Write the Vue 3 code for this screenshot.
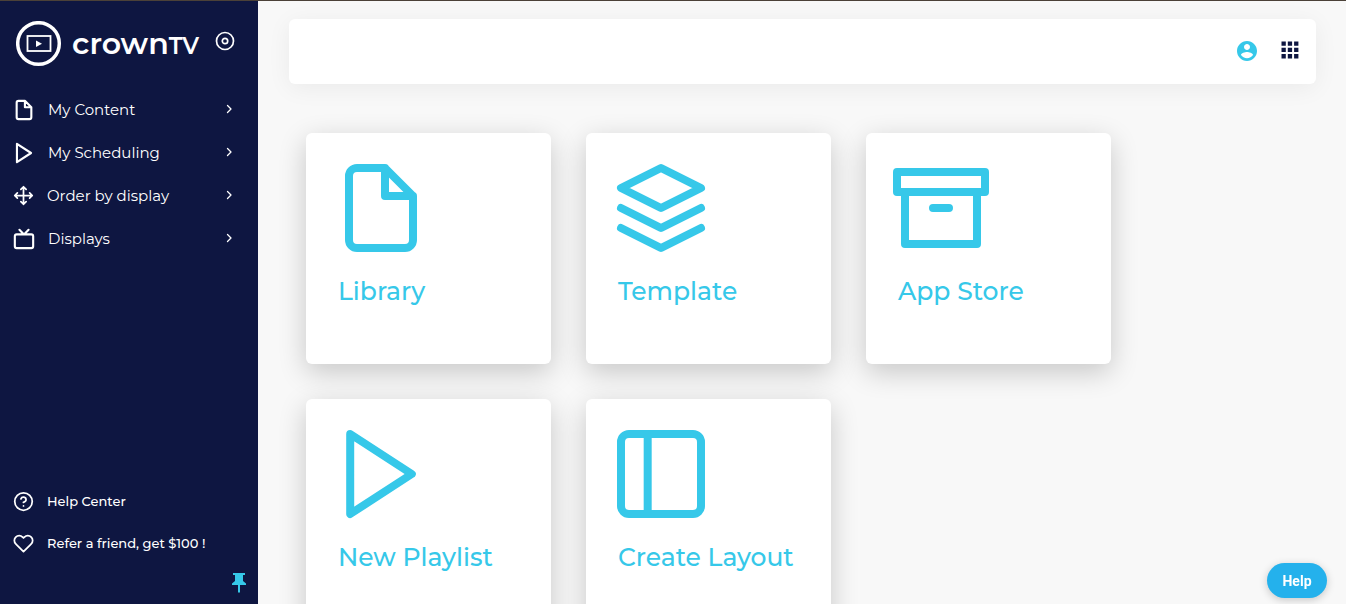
<script setup>
const menu = [
  { label: 'My Content', icon: 'file' },
  { label: 'My Scheduling', icon: 'play' },
  { label: 'Order by display', icon: 'move' },
  { label: 'Displays', icon: 'tv' },
]
const support = [
  { label: 'Help Center', icon: 'help' },
  { label: 'Refer a friend, get $100 !', icon: 'heart' },
]
const cards = [
  { label: 'Library', icon: 'file' },
  { label: 'Template', icon: 'layers' },
  { label: 'App Store', icon: 'archive' },
  { label: 'New Playlist', icon: 'play' },
  { label: 'Create Layout', icon: 'layout' },
]
const paths = {
  file: 'M13 2H6a2 2 0 0 0-2 2v16a2 2 0 0 0 2 2h12a2 2 0 0 0 2-2V9zM13 2v7h7',
  play: 'M4.3 2l15.4 10L4.3 22z',
  move: 'M5 9l-3 3 3 3M9 5l3-3 3 3M15 19l-3 3-3-3M19 9l3 3-3 3M2 12h20M12 2v20',
  tv: 'M4 7h16a2 2 0 0 1 2 2v11a2 2 0 0 1-2 2H4a2 2 0 0 1-2-2V9a2 2 0 0 1 2-2zM17 2l-5 5-5-5',
  help: 'M22 12a10 10 0 1 1-20 0 10 10 0 0 1 20 0zM9.09 9a3 3 0 0 1 5.83 1c0 2-3 3-3 3M12 17h.01',
  heart: 'M20.84 4.61a5.5 5.5 0 0 0-7.78 0L12 5.67l-1.06-1.06a5.5 5.5 0 0 0-7.78 7.78l1.06 1.06L12 21.23l7.78-7.78 1.06-1.06a5.5 5.5 0 0 0 0-7.78z',
  layers: 'M12 2L2 7l10 5 10-5zM2 17l10 5 10-5M2 12l10 5 10-5',
  archive: 'M21 8v13H3V8M1 3h22v5H1zM10 12h4',
  layout: 'M4 2h16a2 2 0 0 1 2 2v16a2 2 0 0 1-2 2H4a2 2 0 0 1-2-2V4a2 2 0 0 1 2-2zM8.67 2v20',
}
</script>

<template>
  <div class="shell">
    <aside class="sidebar">
      <div class="brand">
        <a class="logo" href="#" aria-label="crownTV">
          <svg class="logo-mark" viewBox="0 0 46 46" aria-hidden="true">
            <circle cx="22.500" cy="22.500" r="20.800" fill="none" stroke="#fff" stroke-width="3.500" />
            <rect x="11.500" y="15" width="23" height="15" fill="none" stroke="#fff" stroke-width="1.800" />
            <path d="M20 19.500l6 3.200-6 3.200z" fill="#fff" />
          </svg>
          <span class="word">crown<span class="word-suffix">TV</span></span>
        </a>
        <button class="collapse" type="button" aria-label="Collapse menu">
          <svg viewBox="0 0 20 20" aria-hidden="true">
            <circle cx="10" cy="10" r="8.500" /><circle cx="10" cy="10" r="2.700" />
          </svg>
        </button>
      </div>

      <nav class="menu">
        <a v-for="m in menu" :key="m.label" class="row" href="#">
          <svg class="icon line" :class="m.icon" viewBox="0 0 24 24" aria-hidden="true"><path :d="paths[m.icon]" /></svg>
          <span class="label">{{ m.label }}</span>
          <svg class="chevron line" viewBox="0 0 10 10" aria-hidden="true"><path d="M3.500 1.500L7 5 3.500 8.500" /></svg>
        </a>
      </nav>

      <nav class="support">
        <a v-for="m in support" :key="m.label" class="row" href="#">
          <svg class="icon line" :class="m.icon" viewBox="0 0 24 24" aria-hidden="true"><path :d="paths[m.icon]" /></svg>
          <span class="label">{{ m.label }}</span>
        </a>
      </nav>
      <button class="pin" type="button" aria-label="Pin menu">
        <svg viewBox="0 0 14 20" aria-hidden="true">
          <path d="M1 0h12v2h-2v6l3 2.500v1.500H8v7l-1 1-1-1v-7H0v-1.500L3 8V2H1z" />
        </svg>
      </button>
    </aside>

    <main class="main">
      <header class="topbar">
        <button type="button" class="account" aria-label="Account">
          <svg viewBox="2 2 20 20" aria-hidden="true">
            <path d="M12 2C6.480 2 2 6.480 2 12s4.480 10 10 10 10-4.480 10-10S17.520 2 12 2zm0 3c1.660 0 3 1.340 3 3s-1.340 3-3 3-3-1.340-3-3 1.340-3 3-3zm0 14.200c-2.500 0-4.710-1.280-6-3.220.030-1.990 4-3.080 6-3.080 1.990 0 5.970 1.090 6 3.080-1.290 1.940-3.500 3.220-6 3.220z" />
          </svg>
        </button>
        <button type="button" class="apps" aria-label="Apps">
          <svg viewBox="0 0 18 18" aria-hidden="true">
            <path d="M.5.5h4.300v4.300H.5zM6.800.5h4.300v4.300H6.800zM13.100.5h4.300v4.300h-4.300zM.5 6.800h4.300v4.300H.5zM6.800 6.800h4.300v4.300H6.800zM13.100 6.800h4.300v4.300h-4.300zM.5 13.100h4.300v4.300H.5zM6.800 13.100h4.300v4.300H6.800zM13.100 13.100h4.300v4.300h-4.300z" />
          </svg>
        </button>
      </header>

      <section class="cards">
        <a v-for="c in cards" :key="c.label" class="card" href="#">
          <svg class="card-icon line" viewBox="0 0 24 24" aria-hidden="true"><path :d="paths[c.icon]" /></svg>
          <span class="card-title">{{ c.label }}</span>
        </a>
      </section>
    </main>

    <button class="help-button" type="button">Help</button>
  </div>
</template>

<style>
body {
  margin: 0;
  background: #f8f8f8;
}
</style>

<style scoped>
.shell {
  display: flex;
  box-sizing: border-box;
  height: 100vh;
  border-top: 1px solid #4b4138;
  font-family: Montserrat, Inter, "Liberation Sans", sans-serif;
  background: #f8f8f8;
}
a {
  color: inherit;
  text-decoration: none;
}
button {
  padding: 0;
  border: 0;
  background: none;
  font-family: inherit;
  cursor: pointer;
}
svg {
  display: block;
}
.line {
  fill: none;
  stroke: currentColor;
  stroke-width: 2;
  stroke-linecap: round;
  stroke-linejoin: round;
}
.sidebar {
  display: flex;
  flex: none;
  flex-direction: column;
  box-sizing: border-box;
  width: 258px;
  color: #fff;
  background: #0e1641;
}
.brand {
  display: flex;
  justify-content: space-between;
  align-items: flex-start;
  padding: 20px 23px 0 16px;
}
.logo {
  display: flex;
  align-items: center;
  gap: 10px;
}
.logo-mark {
  width: 46px;
  height: 46px;
}
.word {
  font-size: 30px;
  font-weight: 600;
  line-height: 46px;
}
.word-suffix {
  font-size: 23px;
  line-height: 1;
}
.collapse {
  margin-top: 10px;
}
.collapse svg {
  width: 20px;
  height: 20px;
  fill: none;
  stroke: #fff;
  stroke-width: 1.7;
}
.menu {
  padding-top: 21px;
}
.row {
  display: flex;
  align-items: center;
  gap: 13px;
  height: 43px;
  padding: 0 24px 0 13px;
}
.icon {
  width: 21px;
  height: 21px;
}
.icon.file,
.icon.play,
.icon.tv {
  width: 22px;
  height: 22px;
  stroke-width: 2.3;
}
.label {
  flex: 1;
  font-size: 15px;
  line-height: 20px;
}
.chevron {
  width: 10px;
  height: 10px;
  margin-bottom: 2px;
  stroke-width: 1.3;
}
.support {
  margin-top: auto;
}
.support .row {
  height: 42px;
}
.support .label {
  font-size: 13px;
  font-weight: 500;
}
.pin {
  align-self: flex-end;
  margin: 9px 12px 11px 0;
}
.pin svg {
  width: 14px;
  height: 20px;
  fill: #36c8e9;
}
.main {
  flex: 1;
  min-width: 0;
  padding: 18px 30px 0 31px;
  overflow-y: auto;
  scrollbar-width: none;
}
.topbar {
  display: flex;
  justify-content: flex-end;
  align-items: flex-start;
  gap: 24px;
  height: 65px;
  padding: 22px 17px 0 0;
  box-sizing: border-box;
  border-radius: 6px;
  background: #fff;
  box-shadow: 0 4px 24px rgba(0, 0, 0, 0.06);
}
.account svg {
  width: 20px;
  height: 20px;
  fill: #36c8e9;
}
.apps svg {
  width: 18px;
  height: 18px;
  fill: #0e1641;
}
.cards {
  display: grid;
  grid-template-columns: repeat(auto-fill, 245px);
  gap: 35px;
  padding: 49px 17px 35px;
}
.card {
  box-sizing: border-box;
  height: 231px;
  padding: 27px;
  border-radius: 6px;
  color: #36c8e9;
  background: #fff;
  box-shadow: 0 8px 28px rgba(0, 0, 0, 0.2);
}
.card-icon {
  width: 96px;
  height: 96px;
}
.card-title {
  display: block;
  padding: 19px 0 0 5px;
  font-size: 25px;
  font-weight: 500;
  line-height: 32px;
  white-space: nowrap;
}
.help-button {
  position: fixed;
  right: 19px;
  bottom: 6px;
  width: 60px;
  height: 35px;
  border-radius: 18px;
  color: #fff;
  background: #24b1ec;
  font-family: Roboto, sans-serif;
  font-size: 14px;
  font-weight: 700;
  box-shadow: 0 2px 8px rgba(0, 0, 0, 0.2);
}
</style>
